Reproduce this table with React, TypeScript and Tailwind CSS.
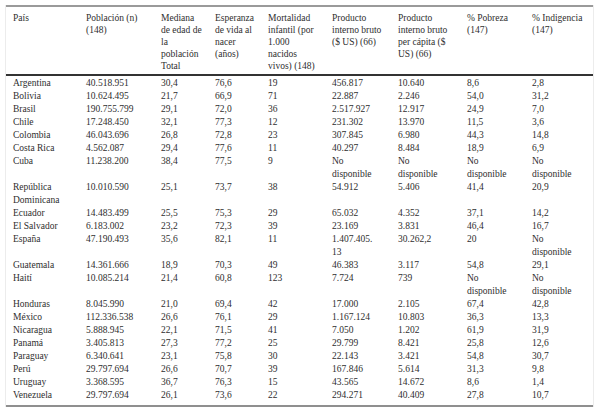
const headers = [
  { w: 'w-[73px]', lines: ['País'] },
  { w: 'w-[75px]', lines: ['Población (n)', '(148)'] },
  { w: 'w-[54px]', lines: ['Mediana', 'de edad de', 'la', 'población', 'Total'] },
  { w: 'w-[53px]', lines: ['Esperanza', 'de vida al', 'nacer', '(años)'] },
  { w: 'w-[64px]', lines: ['Mortalidad', 'infantil (por', '1.000', 'nacidos', 'vivos) (148)'] },
  { w: 'w-[66px]', lines: ['Producto', 'interno bruto', '($ US) (66)'] },
  { w: 'w-[69px]', lines: ['Producto', 'interno bruto', 'per cápita ($', 'US) (66)'] },
  { w: 'w-[65px]', lines: ['% Pobreza', '(147)'] },
  { w: 'w-[68px]', lines: ['% Indigencia', '(147)'] },
];

// "|" marks a line break inside a cell
const rows = [
  ['Argentina', '40.518.951', '30,4', '76,6', '19', '456.817', '10.640', '8,6', '2,8'],
  ['Bolivia', '10.624.495', '21,7', '66,9', '71', '22.887', '2.246', '54,0', '31,2'],
  ['Brasil', '190.755.799', '29,1', '72,0', '36', '2.517.927', '12.917', '24,9', '7,0'],
  ['Chile', '17.248.450', '32,1', '77,3', '12', '231.302', '13.970', '11,5', '3,6'],
  ['Colombia', '46.043.696', '26,8', '72,8', '23', '307.845', '6.980', '44,3', '14,8'],
  ['Costa Rica', '4.562.087', '29,4', '77,6', '11', '40.297', '8.484', '18,9', '6,9'],
  ['Cuba', '11.238.200', '38,4', '77,5', '9', 'No|disponible', 'No|disponible', 'No|disponible', 'No|disponible'],
  ['República|Dominicana', '10.010.590', '25,1', '73,7', '38', '54.912', '5.406', '41,4', '20,9'],
  ['Ecuador', '14.483.499', '25,5', '75,3', '29', '65.032', '4.352', '37,1', '14,2'],
  ['El Salvador', '6.183.002', '23,2', '72,3', '39', '23.169', '3.831', '46,4', '16,7'],
  ['España', '47.190.493', '35,6', '82,1', '11', '1.407.405.|13', '30.262,2', '20', 'No|disponible'],
  ['Guatemala', '14.361.666', '18,9', '70,3', '49', '46.383', '3.117', '54,8', '29,1'],
  ['Haití', '10.085.214', '21,4', '60,8', '123', '7.724', '739', 'No|disponible', 'No|disponible'],
  ['Honduras', '8.045.990', '21,0', '69,4', '42', '17.000', '2.105', '67,4', '42,8'],
  ['México', '112.336.538', '26,6', '76,1', '29', '1.167.124', '10.803', '36,3', '13,3'],
  ['Nicaragua', '5.888.945', '22,1', '71,5', '41', '7.050', '1.202', '61,9', '31,9'],
  ['Panamá', '3.405.813', '27,3', '77,2', '25', '29.799', '8.421', '25,8', '12,6'],
  ['Paraguay', '6.340.641', '23,1', '75,8', '30', '22.143', '3.421', '54,8', '30,7'],
  ['Perú', '29.797.694', '26,6', '70,7', '39', '167.846', '5.614', '31,3', '9,8'],
  ['Uruguay', '3.368.595', '36,7', '76,3', '15', '43.565', '14.672', '8,6', '1,4'],
  ['Venezuela', '29.797.694', '26,1', '73,6', '22', '294.271', '40.409', '27,8', '10,7'],
];

const Lines = ({ text }: { text: string }) => {
  const parts = text.split('|');
  return (
    <>
      {parts.map((p, i) => (
        <span key={i} className="block">
          {p}
        </span>
      ))}
    </>
  );
};

const App = () => {
  return (
    <div className="w-[600px] h-[413px] bg-white pt-[5px] font-['Liberation_Serif',serif] text-[9.5px] text-[#2e2e2e]">
      <div className="ml-[5px] w-[589px] border-x border-[#ececec]">
        <table className="table-fixed border-collapse w-[587px]">
          <thead>
            <tr className="border-t-2 border-t-[#9a9a9a] border-b-2 border-b-[#333]">
              {headers.map((h, i) => (
                <th
                  key={i}
                  className={`${h.w} p-0 pl-[7px] pt-[5px] pb-[2px] text-left align-top font-normal leading-[12px] whitespace-nowrap`}
                >
                  {h.lines.map((l, j) => (
                    <span key={j} className="block">
                      {l}
                    </span>
                  ))}
                </th>
              ))}
            </tr>
          </thead>
          <tbody className="border-b-2 border-b-[#8f8f8f]">
            {rows.map((r, i) => (
              <tr key={i}>
                {r.map((c, j) => (
                  <td
                    key={j}
                    className={`p-0 pl-[7px] align-top leading-[13px] whitespace-nowrap ${i === 0 ? 'pt-[1px]' : ''} ${i === rows.length - 1 ? 'pb-[3px]' : ''}`}
                  >
                    <Lines text={c} />
                  </td>
                ))}
              </tr>
            ))}
          </tbody>
        </table>
      </div>
    </div>
  );
};

export default App;
